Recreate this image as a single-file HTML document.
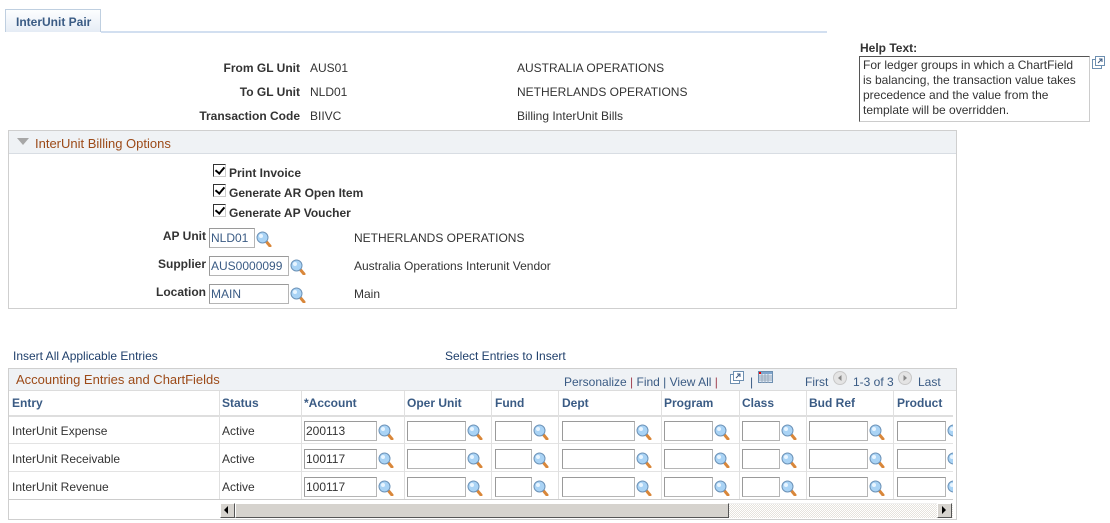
<!DOCTYPE html>
<html><head><meta charset="utf-8"><style>
*{box-sizing:border-box;margin:0;padding:0}
body{width:1110px;height:523px;background:#fff;font-family:"Liberation Sans",Arial,sans-serif;font-size:12px;color:#333;position:relative;overflow:hidden}
.a{position:absolute;white-space:nowrap}
.b{font-weight:bold}
.lbl{font-weight:bold;text-align:right}
.inp{position:absolute;height:20px;border:1px solid #b5b5b5;background:#fff;font-size:12px;padding:2px 1px;color:#333;border-top-color:#9a9a9a;border-left-color:#9a9a9a}
.lk{position:absolute;width:16px;height:16px}
.hd{font-weight:bold;color:#3a5b84}
.cb{position:absolute;width:13px;height:13px;border:1px solid #333;border-right-color:#ccc;border-bottom-color:#ccc;background:#fff}
.cb:after{content:"";position:absolute;left:3px;top:0px;width:4px;height:7px;border:solid #000;border-width:0 2px 2px 0;transform:rotate(40deg)}
.vl{position:absolute;width:1px;background:#e0e0e0}
.hl{position:absolute;height:1px;background:#e3e3e3}
</style></head><body>
<svg width="0" height="0" style="position:absolute"><defs>
<g id="mg"><line x1="9" y1="9" x2="14" y2="15" stroke="#d9873a" stroke-width="3" stroke-linecap="round"/><circle cx="6.5" cy="6.5" r="5.5" fill="#a9d3f5" stroke="#6d93b8" stroke-width="1"/><circle cx="5" cy="5" r="2" fill="#e8f5ff"/></g>
</defs></svg>

<div class="a" style="left:5px;top:9px;width:96px;height:23px;border:1px solid #bfcfe0;border-bottom:none;background:linear-gradient(#fdfeff,#e5ecf5);font-weight:bold;color:#3a5b84;padding:5px 0 0 10px">InterUnit Pair</div>
<div class="a" style="left:101px;top:31px;width:726px;height:2px;background:#d2dff0"></div>

<div class="a lbl" style="left:150px;top:61px;width:150px">From GL Unit</div>
<div class="a" style="left:310px;top:61px">AUS01</div>
<div class="a" style="left:517px;top:61px">AUSTRALIA OPERATIONS</div>
<div class="a lbl" style="left:150px;top:85px;width:150px">To GL Unit</div>
<div class="a" style="left:310px;top:85px">NLD01</div>
<div class="a" style="left:517px;top:85px">NETHERLANDS OPERATIONS</div>
<div class="a lbl" style="left:150px;top:109px;width:150px">Transaction Code</div>
<div class="a" style="left:310px;top:109px">BIIVC</div>
<div class="a" style="left:517px;top:109px">Billing InterUnit Bills</div>

<div class="a b" style="left:860px;top:41px">Help Text:</div>
<div class="a" style="left:859px;top:56px;width:231px;height:66px;border:1px solid #555;border-right-color:#ccc;border-bottom-color:#ccc;padding:1px 12px 1px 3px;white-space:normal;line-height:15px">For ledger groups in which a ChartField is balancing, the transaction value takes precedence and the value from the template will be overridden.</div>
<svg class="a" style="left:1092px;top:56px" width="13" height="13"><rect x="0.5" y="3.5" width="9" height="9" fill="#fff" stroke="#6d8fb0"/><rect x="3.5" y="0.5" width="9" height="9" fill="#fff" stroke="#6d8fb0"/><path d="M6 7 L10 3 M7 3h3v3" stroke="#3a5b84" fill="none"/></svg>

<div class="a" style="left:8px;top:130px;width:949px;height:179px;border:1px solid #cfcfcf"></div>
<div class="a" style="left:9px;top:131px;width:947px;height:23px;background:#eff2f5;border-bottom:1px solid #d8dde3"></div>
<svg class="a" style="left:17px;top:138px" width="12" height="8"><path d="M0 0h12L6 7z" fill="#a7a7a7"/></svg>
<div class="a" style="left:35px;top:136px;font-size:13px;color:#9c4a18">InterUnit Billing Options</div>

<div class="cb" style="left:213px;top:164px"></div><div class="a b" style="left:229px;top:166px">Print Invoice</div>
<div class="cb" style="left:213px;top:184px"></div><div class="a b" style="left:229px;top:186px">Generate AR Open Item</div>
<div class="cb" style="left:213px;top:204px"></div><div class="a b" style="left:229px;top:206px">Generate AP Voucher</div>

<div class="a lbl" style="left:100px;top:229px;width:106px">AP Unit</div>
<div class="inp" style="left:209px;top:228px;width:46px;color:#3a5b84">NLD01</div>
<svg class="lk" style="left:256px;top:231px"><use href="#mg"/></svg>
<div class="a" style="left:354px;top:231px">NETHERLANDS OPERATIONS</div>
<div class="a lbl" style="left:100px;top:257px;width:106px">Supplier</div>
<div class="inp" style="left:209px;top:256px;width:80px;color:#3a5b84">AUS0000099</div>
<svg class="lk" style="left:290px;top:259px"><use href="#mg"/></svg>
<div class="a" style="left:354px;top:259px">Australia Operations Interunit Vendor</div>
<div class="a lbl" style="left:100px;top:285px;width:106px">Location</div>
<div class="inp" style="left:209px;top:284px;width:80px;color:#3a5b84">MAIN</div>
<svg class="lk" style="left:290px;top:287px"><use href="#mg"/></svg>
<div class="a" style="left:354px;top:287px">Main</div>

<div class="a" style="left:13px;top:349px;color:#1f3f6b">Insert All Applicable Entries</div>
<div class="a" style="left:445px;top:349px;color:#1f3f6b">Select Entries to Insert</div>

<div class="a" style="left:8px;top:368px;width:949px;height:152px;border:1px solid #cfcfcf"></div>
<div class="a" style="left:9px;top:369px;width:947px;height:22px;background:#eff2f5;border-bottom:1px solid #dcdcdc"></div>
<div class="a" style="left:16px;top:372px;font-size:13px;color:#9c4a18">Accounting Entries and ChartFields</div>
<div class="a" style="left:564px;top:375px;color:#3a5b84">Personalize <span style="color:#a04050">|</span> Find | View All <span style="color:#a04050">|</span></div>
<svg class="a" style="left:730px;top:371px" width="14" height="13"><rect x="0.5" y="3.5" width="9" height="9" fill="#fff" stroke="#6d8fb0"/><rect x="3.5" y="0.5" width="10" height="9" fill="#fff" stroke="#6d8fb0"/><path d="M6 7 L10 3 M7 3h3v3" stroke="#3a5b84" fill="none"/></svg>
<div class="a" style="left:750px;top:375px;color:#3a5b84">|</div>
<svg class="a" style="left:758px;top:371px" width="15" height="12"><rect x="0.5" y="0.5" width="14" height="11" fill="#dde8f5" stroke="#6d8fb0"/><rect x="1" y="1" width="13" height="2" fill="#7fa5cc"/><rect x="1" y="1" width="2" height="2" fill="#e00"/><path d="M1 5h13M1 7h13M1 9h13M4 3v9M7 3v9M10 3v9" stroke="#9ab"/></svg>
<div class="a" style="left:805px;top:375px;color:#3a5b84">First</div>
<svg class="a" style="left:833px;top:371px" width="14" height="14"><circle cx="7" cy="7" r="6.5" fill="#e4e4e4" stroke="#c8c8c8"/><path d="M8.5 4v6L5 7z" fill="#888"/></svg>
<div class="a" style="left:853px;top:375px;color:#3a5b84">1-3 of 3</div>
<svg class="a" style="left:898px;top:371px" width="14" height="14"><circle cx="7" cy="7" r="6.5" fill="#e4e4e4" stroke="#c8c8c8"/><path d="M5.5 4v6L9 7z" fill="#888"/></svg>
<div class="a" style="left:918px;top:375px;color:#3a5b84">Last</div>

<div class="hl" style="left:9px;top:415px;width:944px;background:#dedede;height:2px"></div>
<div class="hl" style="left:9px;top:443px;width:944px"></div>
<div class="hl" style="left:9px;top:471px;width:944px"></div>
<div class="hl" style="left:9px;top:499px;width:944px;background:#ccc"></div>
<div class="vl" style="left:219px;top:391px;height:108px"></div>
<div class="vl" style="left:301px;top:391px;height:108px"></div>
<div class="vl" style="left:404px;top:391px;height:108px"></div>
<div class="vl" style="left:491px;top:391px;height:108px"></div>
<div class="vl" style="left:558px;top:391px;height:108px"></div>
<div class="vl" style="left:661px;top:391px;height:108px"></div>
<div class="vl" style="left:739px;top:391px;height:108px"></div>
<div class="vl" style="left:806px;top:391px;height:108px"></div>
<div class="vl" style="left:893px;top:391px;height:108px"></div>

<div class="a hd" style="left:12px;top:396px">Entry</div>
<div class="a hd" style="left:222px;top:396px">Status</div>
<div class="a hd" style="left:304px;top:396px">*Account</div>
<div class="a hd" style="left:407px;top:396px">Oper Unit</div>
<div class="a hd" style="left:495px;top:396px">Fund</div>
<div class="a hd" style="left:562px;top:396px">Dept</div>
<div class="a hd" style="left:664px;top:396px">Program</div>
<div class="a hd" style="left:742px;top:396px">Class</div>
<div class="a hd" style="left:809px;top:396px">Bud Ref</div>
<div class="a hd" style="left:897px;top:396px">Product</div>

<div class="a" style="left:12px;top:424px">InterUnit Expense</div>
<div class="a" style="left:222px;top:424px">Active</div>
<div class="a" style="left:12px;top:452px">InterUnit Receivable</div>
<div class="a" style="left:222px;top:452px">Active</div>
<div class="a" style="left:12px;top:480px">InterUnit Revenue</div>
<div class="a" style="left:222px;top:480px">Active</div>

<div style="position:absolute;left:0;top:0;width:953px;height:523px;overflow:hidden">
<div class="inp" style="left:304px;top:421px;width:73px">200113</div><svg class="lk" style="left:378px;top:424px"><use href="#mg"/></svg>
<div class="inp" style="left:407px;top:421px;width:59px"></div><svg class="lk" style="left:467px;top:424px"><use href="#mg"/></svg>
<div class="inp" style="left:495px;top:421px;width:37px"></div><svg class="lk" style="left:533px;top:424px"><use href="#mg"/></svg>
<div class="inp" style="left:562px;top:421px;width:73px"></div><svg class="lk" style="left:636px;top:424px"><use href="#mg"/></svg>
<div class="inp" style="left:664px;top:421px;width:49px"></div><svg class="lk" style="left:714px;top:424px"><use href="#mg"/></svg>
<div class="inp" style="left:742px;top:421px;width:38px"></div><svg class="lk" style="left:781px;top:424px"><use href="#mg"/></svg>
<div class="inp" style="left:809px;top:421px;width:59px"></div><svg class="lk" style="left:869px;top:424px"><use href="#mg"/></svg>
<div class="inp" style="left:897px;top:421px;width:49px"></div><svg class="lk" style="left:947px;top:424px"><use href="#mg"/></svg>
<div class="inp" style="left:304px;top:449px;width:73px">100117</div><svg class="lk" style="left:378px;top:452px"><use href="#mg"/></svg>
<div class="inp" style="left:407px;top:449px;width:59px"></div><svg class="lk" style="left:467px;top:452px"><use href="#mg"/></svg>
<div class="inp" style="left:495px;top:449px;width:37px"></div><svg class="lk" style="left:533px;top:452px"><use href="#mg"/></svg>
<div class="inp" style="left:562px;top:449px;width:73px"></div><svg class="lk" style="left:636px;top:452px"><use href="#mg"/></svg>
<div class="inp" style="left:664px;top:449px;width:49px"></div><svg class="lk" style="left:714px;top:452px"><use href="#mg"/></svg>
<div class="inp" style="left:742px;top:449px;width:38px"></div><svg class="lk" style="left:781px;top:452px"><use href="#mg"/></svg>
<div class="inp" style="left:809px;top:449px;width:59px"></div><svg class="lk" style="left:869px;top:452px"><use href="#mg"/></svg>
<div class="inp" style="left:897px;top:449px;width:49px"></div><svg class="lk" style="left:947px;top:452px"><use href="#mg"/></svg>
<div class="inp" style="left:304px;top:477px;width:73px">100117</div><svg class="lk" style="left:378px;top:480px"><use href="#mg"/></svg>
<div class="inp" style="left:407px;top:477px;width:59px"></div><svg class="lk" style="left:467px;top:480px"><use href="#mg"/></svg>
<div class="inp" style="left:495px;top:477px;width:37px"></div><svg class="lk" style="left:533px;top:480px"><use href="#mg"/></svg>
<div class="inp" style="left:562px;top:477px;width:73px"></div><svg class="lk" style="left:636px;top:480px"><use href="#mg"/></svg>
<div class="inp" style="left:664px;top:477px;width:49px"></div><svg class="lk" style="left:714px;top:480px"><use href="#mg"/></svg>
<div class="inp" style="left:742px;top:477px;width:38px"></div><svg class="lk" style="left:781px;top:480px"><use href="#mg"/></svg>
<div class="inp" style="left:809px;top:477px;width:59px"></div><svg class="lk" style="left:869px;top:480px"><use href="#mg"/></svg>
<div class="inp" style="left:897px;top:477px;width:49px"></div><svg class="lk" style="left:947px;top:480px"><use href="#mg"/></svg>
</div>

<div class="a" style="left:220px;top:503px;width:733px;height:15px;background:repeating-conic-gradient(#e6e3dd 0 25%,#fff 0 50%) 0 0/2px 2px;border-top:1px solid #f0f0f0"></div>
<div class="a" style="left:220px;top:503px;width:15px;height:15px;background:#d6d3ce;border:1px solid;border-color:#fff #555 #555 #fff"></div>
<svg class="a" style="left:224px;top:506px" width="6" height="9"><path d="M4 0v8L0 4z" fill="#000"/></svg>
<div class="a" style="left:235px;top:503px;width:494px;height:15px;background:#d6d3ce;border:1px solid;border-color:#fff #555 #555 #fff"></div>
<div class="a" style="left:937px;top:503px;width:15px;height:15px;background:#d6d3ce;border:1px solid;border-color:#fff #555 #555 #fff"></div>
<svg class="a" style="left:942px;top:506px" width="6" height="9"><path d="M0 0v8L4 4z" fill="#000"/></svg>
</body></html>
